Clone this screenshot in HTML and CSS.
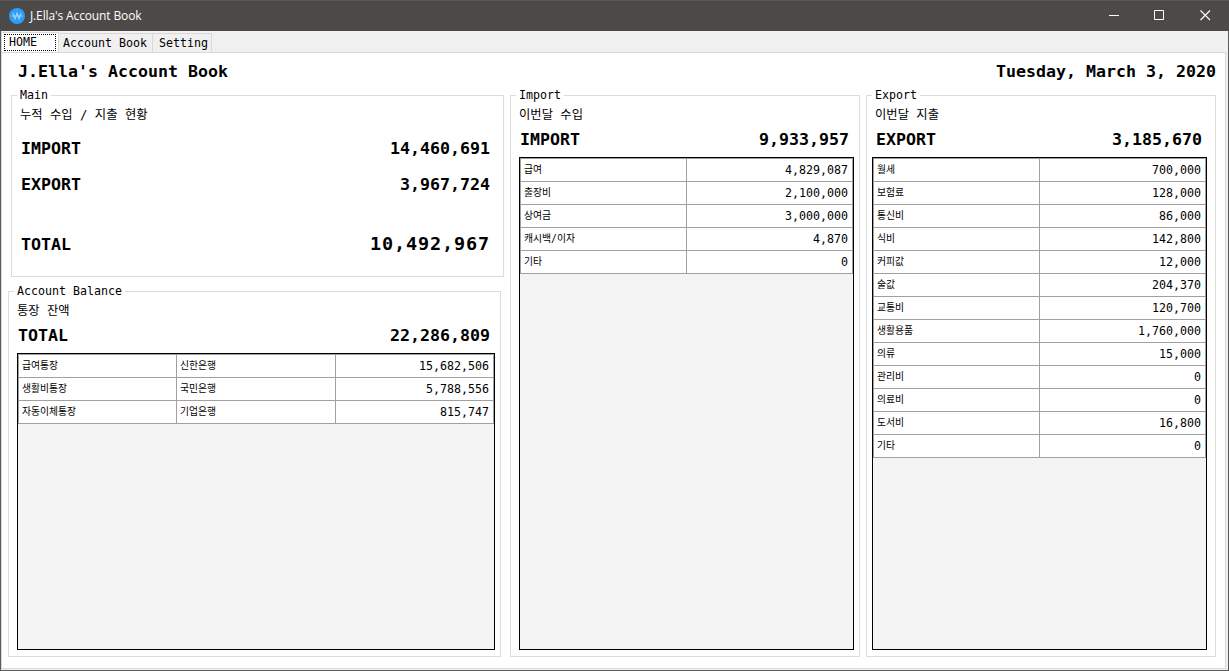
FILE: index.html
```html
<!DOCTYPE html>
<html lang="ko">
<head>
<meta charset="utf-8">
<title>J.Ella's Account Book</title>
<link rel="stylesheet" href="styles.css">
</head>
<body>
<div class="window">
  <header class="titlebar">
    <svg class="logo" width="16" height="16" viewBox="0 0 16 16"><circle cx="8" cy="8" r="8" fill="#2e9df7"/><path d="M4 4.8l2 6.2 2-6 2 6 2-6.2" fill="none" stroke="#9fd3fc" stroke-width="1.1"/><path d="M2.5 8h11" stroke="#9fd3fc"/></svg>
    <span class="caption">J.Ella's Account Book</span>
    <svg class="controls" width="102" height="11" viewBox="0 0 102 11"><path d="M0 5.5h10M45.5.5h9v9h-9z" fill="none" stroke="#fff"/><path d="M91.5.5l9.5 9.5M101 .5l-9.5 9.5" fill="none" stroke="#fff" stroke-width="1.1"/></svg>
  </header>
  <nav class="tabs">
    <div class="tab active"><span>HOME</span></div>
    <div class="tab book">Account Book</div>
    <div class="tab setting">Setting</div>
  </nav>
  <main class="page">
    <div class="heading"><span>J.Ella's Account Book</span><span>Tuesday, March 3, 2020</span></div>
    <div class="columns">
      <div class="left">
        <section class="group summary">
          <h2>Main</h2>
          <p class="note">누적 수입 / 지출 현황</p>
          <div class="sum"><span>IMPORT</span><span>14,460,691</span></div>
          <div class="sum"><span>EXPORT</span><span>3,967,724</span></div>
          <div class="sum grand"><span>TOTAL</span><span class="big">10,492,967</span></div>
        </section>
        <section class="group balance">
          <h2>Account Balance</h2>
          <p class="note">통장 잔액</p>
          <div class="total"><span>TOTAL</span><span>22,286,809</span></div>
          <div class="sheet"><div class="cells three">
            <i>급여통장</i><i>신한은행</i><b>15,682,506</b>
            <i>생활비통장</i><i>국민은행</i><b>5,788,556</b>
            <i>자동이체통장</i><i>기업은행</i><b>815,747</b>
          </div></div>
        </section>
      </div>
      <section class="group import">
        <h2>Import</h2>
        <p class="note">이번달 수입</p>
        <div class="total"><span>IMPORT</span><span>9,933,957</span></div>
        <div class="sheet"><div class="cells">
          <i>급여</i><b>4,829,087</b>
          <i>출장비</i><b>2,100,000</b>
          <i>상여금</i><b>3,000,000</b>
          <i>캐시백/이자</i><b>4,870</b>
          <i>기타</i><b>0</b>
        </div></div>
      </section>
      <section class="group export">
        <h2>Export</h2>
        <p class="note">이번달 지출</p>
        <div class="total"><span>EXPORT</span><span>3,185,670</span></div>
        <div class="sheet"><div class="cells">
          <i>월세</i><b>700,000</b>
          <i>보험료</i><b>128,000</b>
          <i>통신비</i><b>86,000</b>
          <i>식비</i><b>142,800</b>
          <i>커피값</i><b>12,000</b>
          <i>술값</i><b>204,370</b>
          <i>교통비</i><b>120,700</b>
          <i>생활용품</i><b>1,760,000</b>
          <i>의류</i><b>15,000</b>
          <i>관리비</i><b>0</b>
          <i>의료비</i><b>0</b>
          <i>도서비</i><b>16,800</b>
          <i>기타</i><b>0</b>
        </div></div>
      </section>
    </div>
  </main>
</div>
</body>
</html>
```
FILE: styles.css
```css
* { box-sizing: border-box; }
body { margin: 0; overflow: hidden; }
.window {
  width: 1229px; height: 671px; border: 1px solid #5b5a58; border-top: 0;
  background: #f0f0f0; color: #000; display: flex; flex-direction: column;
  font: 11.63px "DejaVu Sans Mono", "Noto Sans CJK KR", monospace;
  white-space: nowrap;
}
.titlebar {
  height: 31px; margin: 0 -1px; padding: 0 18px 1px 9px; flex: none;
  background: #4c4a48; border-top: 1px solid #5b5a58;
  display: flex; align-items: center; color: #fff;
}
.caption { margin-left: 5px; font: 12px "Open Sans", "Noto Sans", sans-serif; letter-spacing: -0.13px; }
.controls { margin-left: auto; }
.tabs { height: 21px; flex: none; display: flex; align-items: flex-end; }
.tab {
  height: 19px; line-height: 19px; background: #f0f0f0;
  border: 1px solid #d9d9d9; border-width: 1px 1px 0 0;
}
.tab.active { width: 58px; height: 20px; background: #fff; padding: 1px 2px 1px 2px; border-left-width: 1px; }
.tab.active span { display: block; height: 17px; width: 52px; border: 1px dotted #000; line-height: 14px; padding-left: 4px; }
.book { width: 94px; padding-left: 4px; }
.setting { width: 59px; padding-left: 6px; }
.page {
  height: 617px; width: 1225px; background: #fff; border: 1px solid #d9d9d9;
}
.heading {
  height: 42px; padding: 0 9px 6px 16px; display: flex; justify-content: space-between;
  align-items: center; font-size: 16.62px; font-weight: bold;
}
.columns { display: flex; padding-left: 6px; }
.left { width: 496px; margin-right: 6px; }
.group { position: relative; border: 1px solid #dcdcdc; width: 350px; height: 562px; }
.group h2 {
  position: absolute; left: 5px; top: -8px; margin: 0; padding: 0 3px;
  background: #fff; font-size: inherit; font-weight: normal; line-height: 15px;
}
.summary { width: 493px; height: 182px; margin: 0 0 14px 3px; }
.balance { width: 493px; height: 366px; }
.import { margin-right: 6px; }
.note { margin: 9px 0 0 8px; height: 20px; line-height: 21px; font-size: 12.3px; }
.sum, .total { display: flex; justify-content: space-between; align-items: center; font-size: 16.62px; font-weight: bold; }
.sum { height: 36px; padding: 0 13px 0 9px; }
.note + .sum { margin-top: 5px; }
.grand { margin-top: 24px; }
.big { font-size: 18.5px; letter-spacing: 0.86px; margin: -2px 0 0; }
.total { height: 28px; padding: 0 10px 0 9px; }
.export .total { padding-right: 13px; }
.sheet { margin: 4px 5px 0 8px; height: 493px; border: 1px solid #000; background: #f4f4f4; }
.balance .sheet { height: 297px; }
.export .sheet { margin: 4px 8px 0 5px; }
.cells {
  display: grid; grid-template-columns: 166px 1fr; grid-auto-rows: 23px;
  border: 1px solid #a0a0a0; border-bottom: 0; background: #fff;
}
.three { grid-template-columns: 158px 159px 1fr; }
.cells i, .cells b { font-style: normal; font-weight: normal; line-height: 23px; border-bottom: 1px solid #a0a0a0; }
.cells i { font-size: 9.8px; line-height: 22px; padding-left: 3px; border-right: 1px solid #a0a0a0; }
.cells b { text-align: right; padding-right: 4px; }
```
